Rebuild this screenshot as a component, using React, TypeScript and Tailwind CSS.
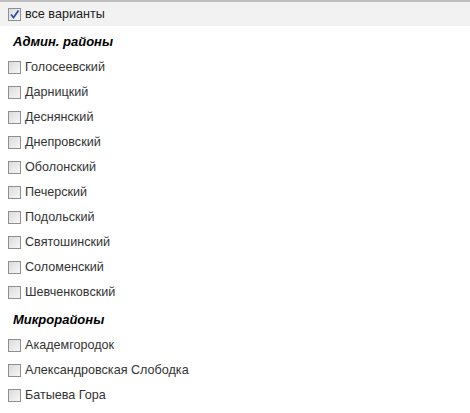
const admin = [
  "Голосеевский",
  "Дарницкий",
  "Деснянский",
  "Днепровский",
  "Оболонский",
  "Печерский",
  "Подольский",
  "Святошинский",
  "Соломенский",
  "Шевченковский",
];

const micro = ["Академгородок", "Александровская Слободка", "Батыева Гора"];

const Box = ({ checked = false }: { checked?: boolean }) => (
  <span className="flex h-[13px] w-[13px] shrink-0 items-center justify-center border border-[#8e8f8f] bg-gradient-to-br from-[#dcdcdc] to-[#f6f6f6]">
    {checked && (
      <svg width="11" height="11" viewBox="0 0 11 11">
        <path d="M2 5.5 L4.5 8.5 L9.5 1.5" fill="none" stroke="#2a4fa8" strokeWidth="1.8" />
      </svg>
    )}
  </span>
);

const Row = ({ label }: { label: string }) => (
  <label className="flex h-[25px] items-center gap-[4px] pl-[8px] text-[12.6px] text-[#333]">
    <Box />
    <span>{label}</span>
  </label>
);

export default function App() {
  return (
    <div className="h-[413px] w-[470px] overflow-hidden bg-white font-['Liberation_Sans',Arial,sans-serif]">
      <div className="flex h-[26px] items-center gap-[4px] border-t-2 border-[#bdbdbd] bg-[#f2f2f2] pl-[8px] text-[12.6px] text-[#222]">
        <Box checked />
        <span>все варианты</span>
      </div>
      <div className="flex h-[29px] items-center pl-[13px] pt-[2px] text-[13px] font-bold italic text-black">
        Админ. районы
      </div>
      {admin.map((a) => (
        <Row key={a} label={a} />
      ))}
      <div className="flex h-[28px] items-center pl-[13px] pt-[2px] text-[13px] font-bold italic text-black">
        Микрорайоны
      </div>
      {micro.map((a) => (
        <Row key={a} label={a} />
      ))}
    </div>
  );
}
